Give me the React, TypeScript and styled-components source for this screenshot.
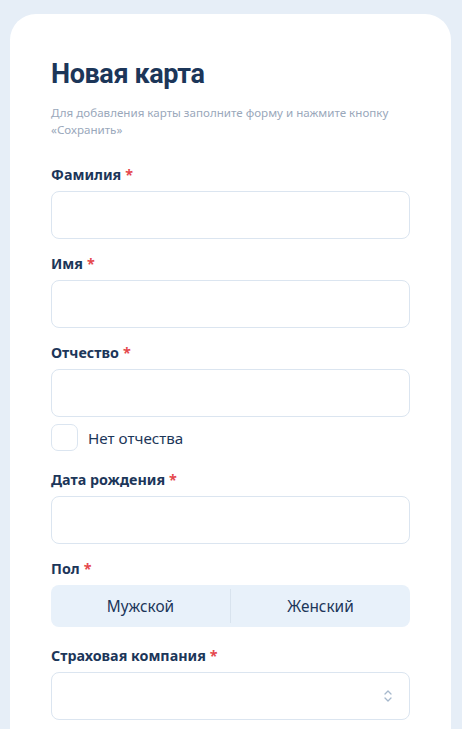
import React from 'react'
import styled, { createGlobalStyle } from 'styled-components'

const GlobalStyle = createGlobalStyle`
  html, body {
    margin: 0;
    padding: 0;
    background: #e6eef7;
    font-family: 'Noto Sans', 'Open Sans', sans-serif;
  }
  * {
    box-sizing: border-box;
  }
`

const Page = styled.div`
  min-height: 729px;
  padding: 14px 11px 0 10px;
  background: #e6eef7;
  overflow: hidden;
  height: 729px;
`
const Card = styled.div`
  background: #ffffff;
  border-radius: 26px 26px 0 0;
  padding: 42px 41px 40px 41px;
  min-height: 760px;
`
const Title = styled.h1`
  margin: 0;
  font-family: Roboto, 'Noto Sans', sans-serif;
  font-size: 27px;
  font-weight: 700;
  line-height: 36px;
  letter-spacing: -0.4px;
  color: #1c3659;
`
const Subtitle = styled.p`
  margin: 12px 0 0;
  font-size: 11.6px;
  line-height: 17px;
  color: #9aa8bb;
`
const Form = styled.div`
  display: flex;
  flex-direction: column;
  margin-top: 28px;
`
const Field = styled.div`
  display: flex;
  flex-direction: column;
  margin-top: ${({ $gap }: FieldProps) => ($gap !== undefined ? $gap : 16)}px;
`
const Label = styled.label`
  font-size: 14.3px;
  font-weight: 700;
  line-height: 17px;
  color: #1c3659;
  margin-bottom: 8px;
`
const Star = styled.span`
  color: #e5484d;
  margin-left: 4px;
`
const Input = styled.div`
  height: 48px;
  border: 1px solid #dbe5f0;
  border-radius: 8px;
  background: #fff;
  display: flex;
  align-items: center;
  justify-content: flex-end;
  padding-right: 16px;
`
const CheckRow = styled.div`
  display: flex;
  align-items: center;
  gap: 10px;
  margin-top: 7px;
`
const Box = styled.div`
  width: 27px;
  height: 27px;
  border: 1px solid #dbe5f0;
  border-radius: 7px;
`
const CheckText = styled.span`
  font-size: 15.2px;
  line-height: 20px;
  color: #1c3659;
`
const Segment = styled.div`
  display: flex;
  height: 42px;
  border-radius: 8px;
  background: #e8f1fa;
  align-items: center;
`
const SegItem = styled.div`
  flex: 1;
  font-size: 15.4px;
  color: #1c3659;
  display: flex;
  align-items: center;
  justify-content: center;
  border-left: ${({ $divider }: SegProps) => ($divider ? '1px solid #d8e3ee' : 'none')};
  height: 34px;
`

const Chevrons = () => (
  <svg width="10" height="16" viewBox="0 0 10 16" fill="none">
    <path d="M2 6l3-3 3 3" stroke="#a6b8cc" strokeWidth="1.3" strokeLinecap="round" strokeLinejoin="round" />
    <path d="M2 10l3 3 3-3" stroke="#a6b8cc" strokeWidth="1.3" strokeLinecap="round" strokeLinejoin="round" />
  </svg>
)

const TextField = ({ label, gap }: { label: string; gap?: number }) => (
  <Field $gap={gap}>
    <Label>
      {label}
      <Star>*</Star>
    </Label>
    <Input />
  </Field>
)

const App = () => {
  return (
    <Page>
      <GlobalStyle />
      <Card>
        <Title>Новая карта</Title>
        <Subtitle>
          Для добавления карты заполните форму и нажмите кнопку «Сохранить»
        </Subtitle>
        <Form>
          <TextField label="Фамилия" gap={0} />
          <TextField label="Имя" />
          <TextField label="Отчество" />
          <CheckRow>
            <Box />
            <CheckText>Нет отчества</CheckText>
          </CheckRow>
          <TextField label="Дата рождения" gap={20} />
          <Field>
            <Label>
              Пол
              <Star>*</Star>
            </Label>
            <Segment>
              <SegItem>Мужской</SegItem>
              <SegItem $divider>Женский</SegItem>
            </Segment>
          </Field>
          <Field $gap={20}>
            <Label>
              Страховая компания
              <Star>*</Star>
            </Label>
            <Input>
              <Chevrons />
            </Input>
          </Field>
        </Form>
      </Card>
    </Page>
  )
}

type FieldProps = {
  $gap?: number
}
type SegProps = {
  $divider?: boolean
}

export default App
